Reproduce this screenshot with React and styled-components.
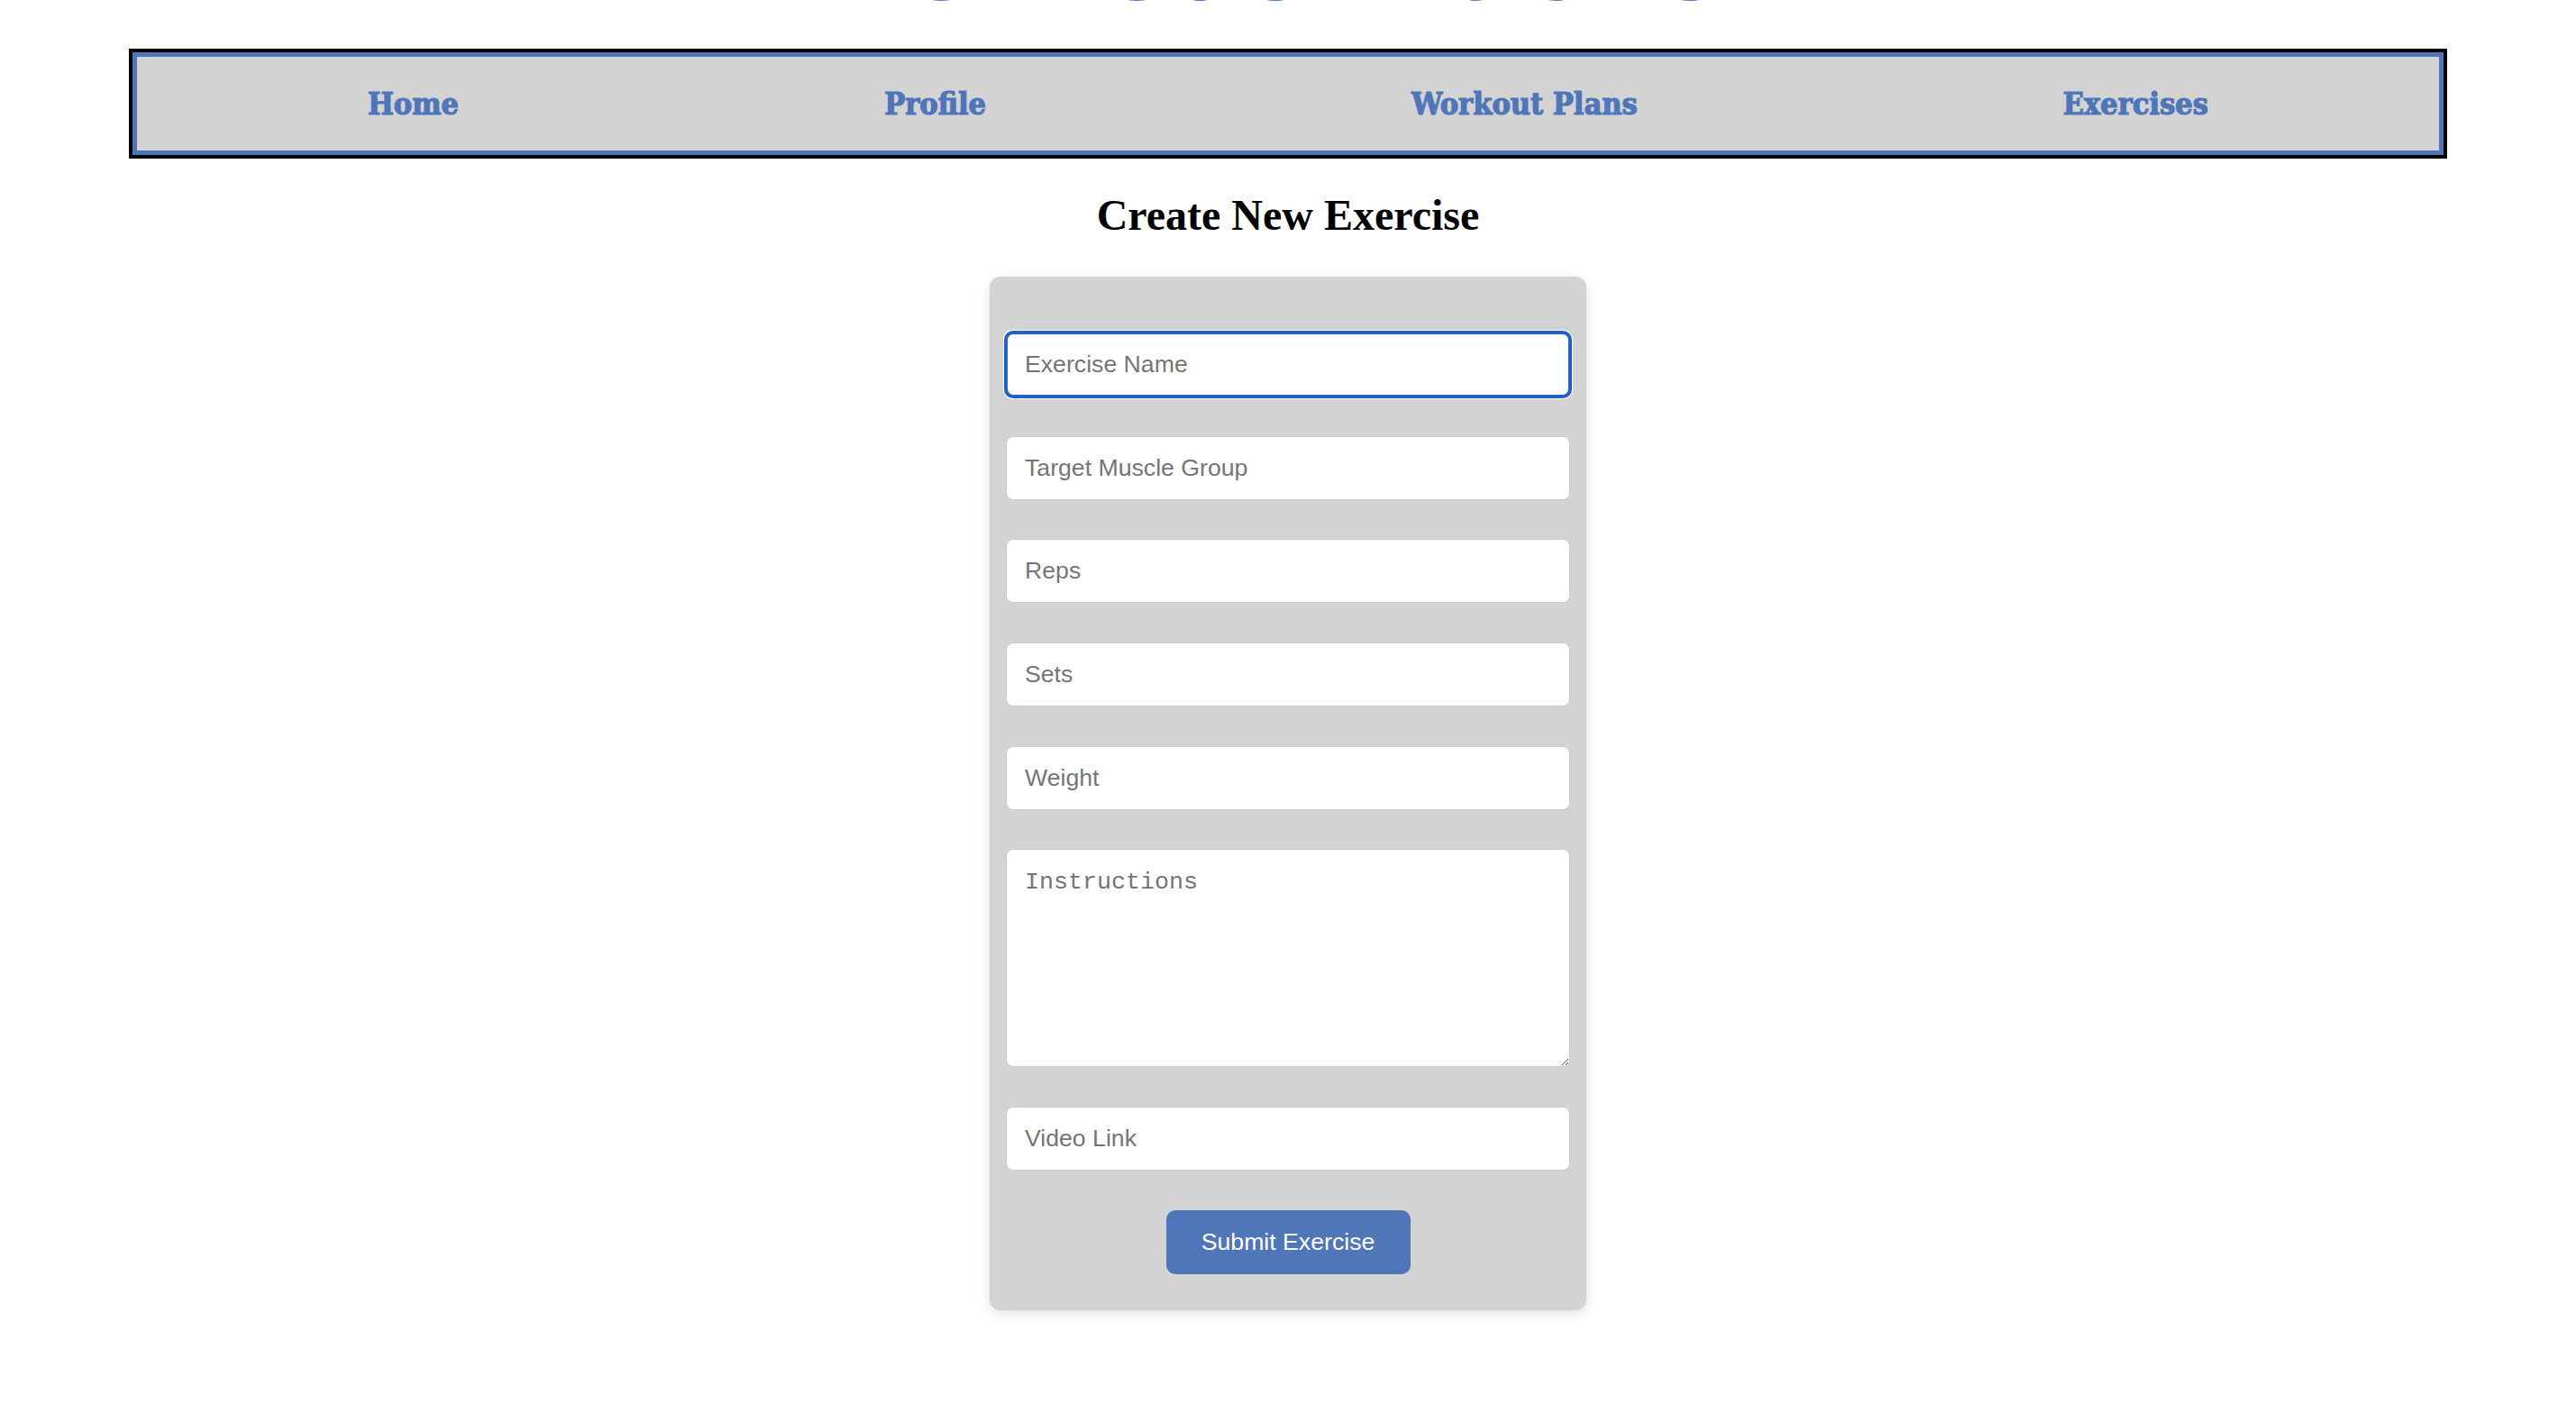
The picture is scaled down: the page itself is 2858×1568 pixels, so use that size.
import React from 'react';
import styled, { createGlobalStyle } from 'styled-components';

const GlobalStyle = createGlobalStyle`
    body {
        margin: 0;
        background: #ffffff;
        font-family: "Liberation Sans", Arial, sans-serif;
    }
`;

const Page = styled.div`
    display: flex;
    flex-direction: column;
    align-items: center;
    padding-bottom: 100px;
`;

// page is scrolled a little: only the bottom of the big title peeks out
const Title = styled.h1`
    margin: -110px 0 0;
    font-family: "DejaVu Serif Condensed", "DejaVu Serif", serif;
    font-stretch: condensed;
    font-weight: bold;
    font-size: 128px;
    line-height: 128px;
    color: #4f76b9;
    text-align: center;
`;

const Nav = styled.nav`
    width: 90%;
    margin-top: 36px;
    box-sizing: border-box;
    border: 4px solid #000000;
`;

const NavList = styled.ul`
    list-style: none;
    margin: 0;
    padding: 0 20px;
    height: 104px;
    border: 5.5px solid #4f76b9;
    background: #d3d3d3;
    display: flex;
    justify-content: space-around;
    align-items: center;
`;

const NavLink = styled.a`
    font-family: "DejaVu Serif Condensed", "DejaVu Serif", serif;
    font-stretch: condensed;
    font-weight: bold;
    font-size: 34px;
    color: #4f76b9;
    -webkit-text-stroke: 1.2px #4f76b9;
    text-decoration: none;
    cursor: pointer;
`;

const Heading = styled.h2`
    margin: 36px 0 42px;
    font-family: "Liberation Serif", "Times New Roman", serif;
    font-weight: bold;
    font-size: 48px;
    line-height: 53px;
    color: #000000;
`;

const Form = styled.form`
    width: 662px;
    box-sizing: border-box;
    padding: 62px 18px 40px;
    display: flex;
    flex-direction: column;
    gap: 43.7px;
    background: #d3d3d3;
    border-radius: 12px;
    box-shadow: 0 4px 14px rgba(0, 0, 0, 0.12);
`;

const Input = styled.input`
    box-sizing: border-box;
    height: 71px;
    width: 100%;
    padding: 0 20px;
    border: 1px solid #cccccc;
    border-radius: 8px;
    background: #ffffff;
    font-family: "Liberation Sans", Arial, sans-serif;
    font-size: 26.67px;
    color: #222222;
    outline: none;
    ${(p) => p.$focused && `
        border: 2px solid #2160c6;
        padding: 0 19px;
        box-shadow: 0 0 0 2px #2160c6, 0 0 0 3px #ffffff;
    `}
    &::placeholder {
        color: #757575;
    }
`;

const TextArea = styled.textarea`
    box-sizing: border-box;
    height: 242px;
    width: 100%;
    padding: 21px 20px;
    border: 1px solid #cccccc;
    border-radius: 8px;
    background: #ffffff;
    font-family: "Liberation Mono", "Courier New", monospace;
    font-size: 26.67px;
    resize: vertical;
    outline: none;
    &::placeholder {
        color: #757575;
    }
`;

const Submit = styled.button`
    align-self: center;
    width: 271px;
    height: 71px;
    padding: 0;
    border: none;
    border-radius: 10px;
    background: #4f76b9;
    color: #ffffff;
    font-family: "Liberation Sans", Arial, sans-serif;
    font-size: 26.67px;
    cursor: pointer;
`;

const links = ['Home', 'Profile', 'Workout Plans', 'Exercises'];

const App = () => {
    return (
        <Page>
            <GlobalStyle />
            <Title>Workout Tracker</Title>
            <Nav>
                <NavList>
                    {links.map((l) => (
                        <li key={l}><NavLink>{l}</NavLink></li>
                    ))}
                </NavList>
            </Nav>
            <Heading>Create New Exercise</Heading>
            <Form onSubmit={(e) => e.preventDefault()}>
                <Input $focused placeholder="Exercise Name" />
                <Input placeholder="Target Muscle Group" />
                <Input placeholder="Reps" />
                <Input placeholder="Sets" />
                <Input placeholder="Weight" />
                <TextArea placeholder="Instructions" />
                <Input placeholder="Video Link" />
                <Submit type="submit">Submit Exercise</Submit>
            </Form>
        </Page>
    );
};

export default App;
